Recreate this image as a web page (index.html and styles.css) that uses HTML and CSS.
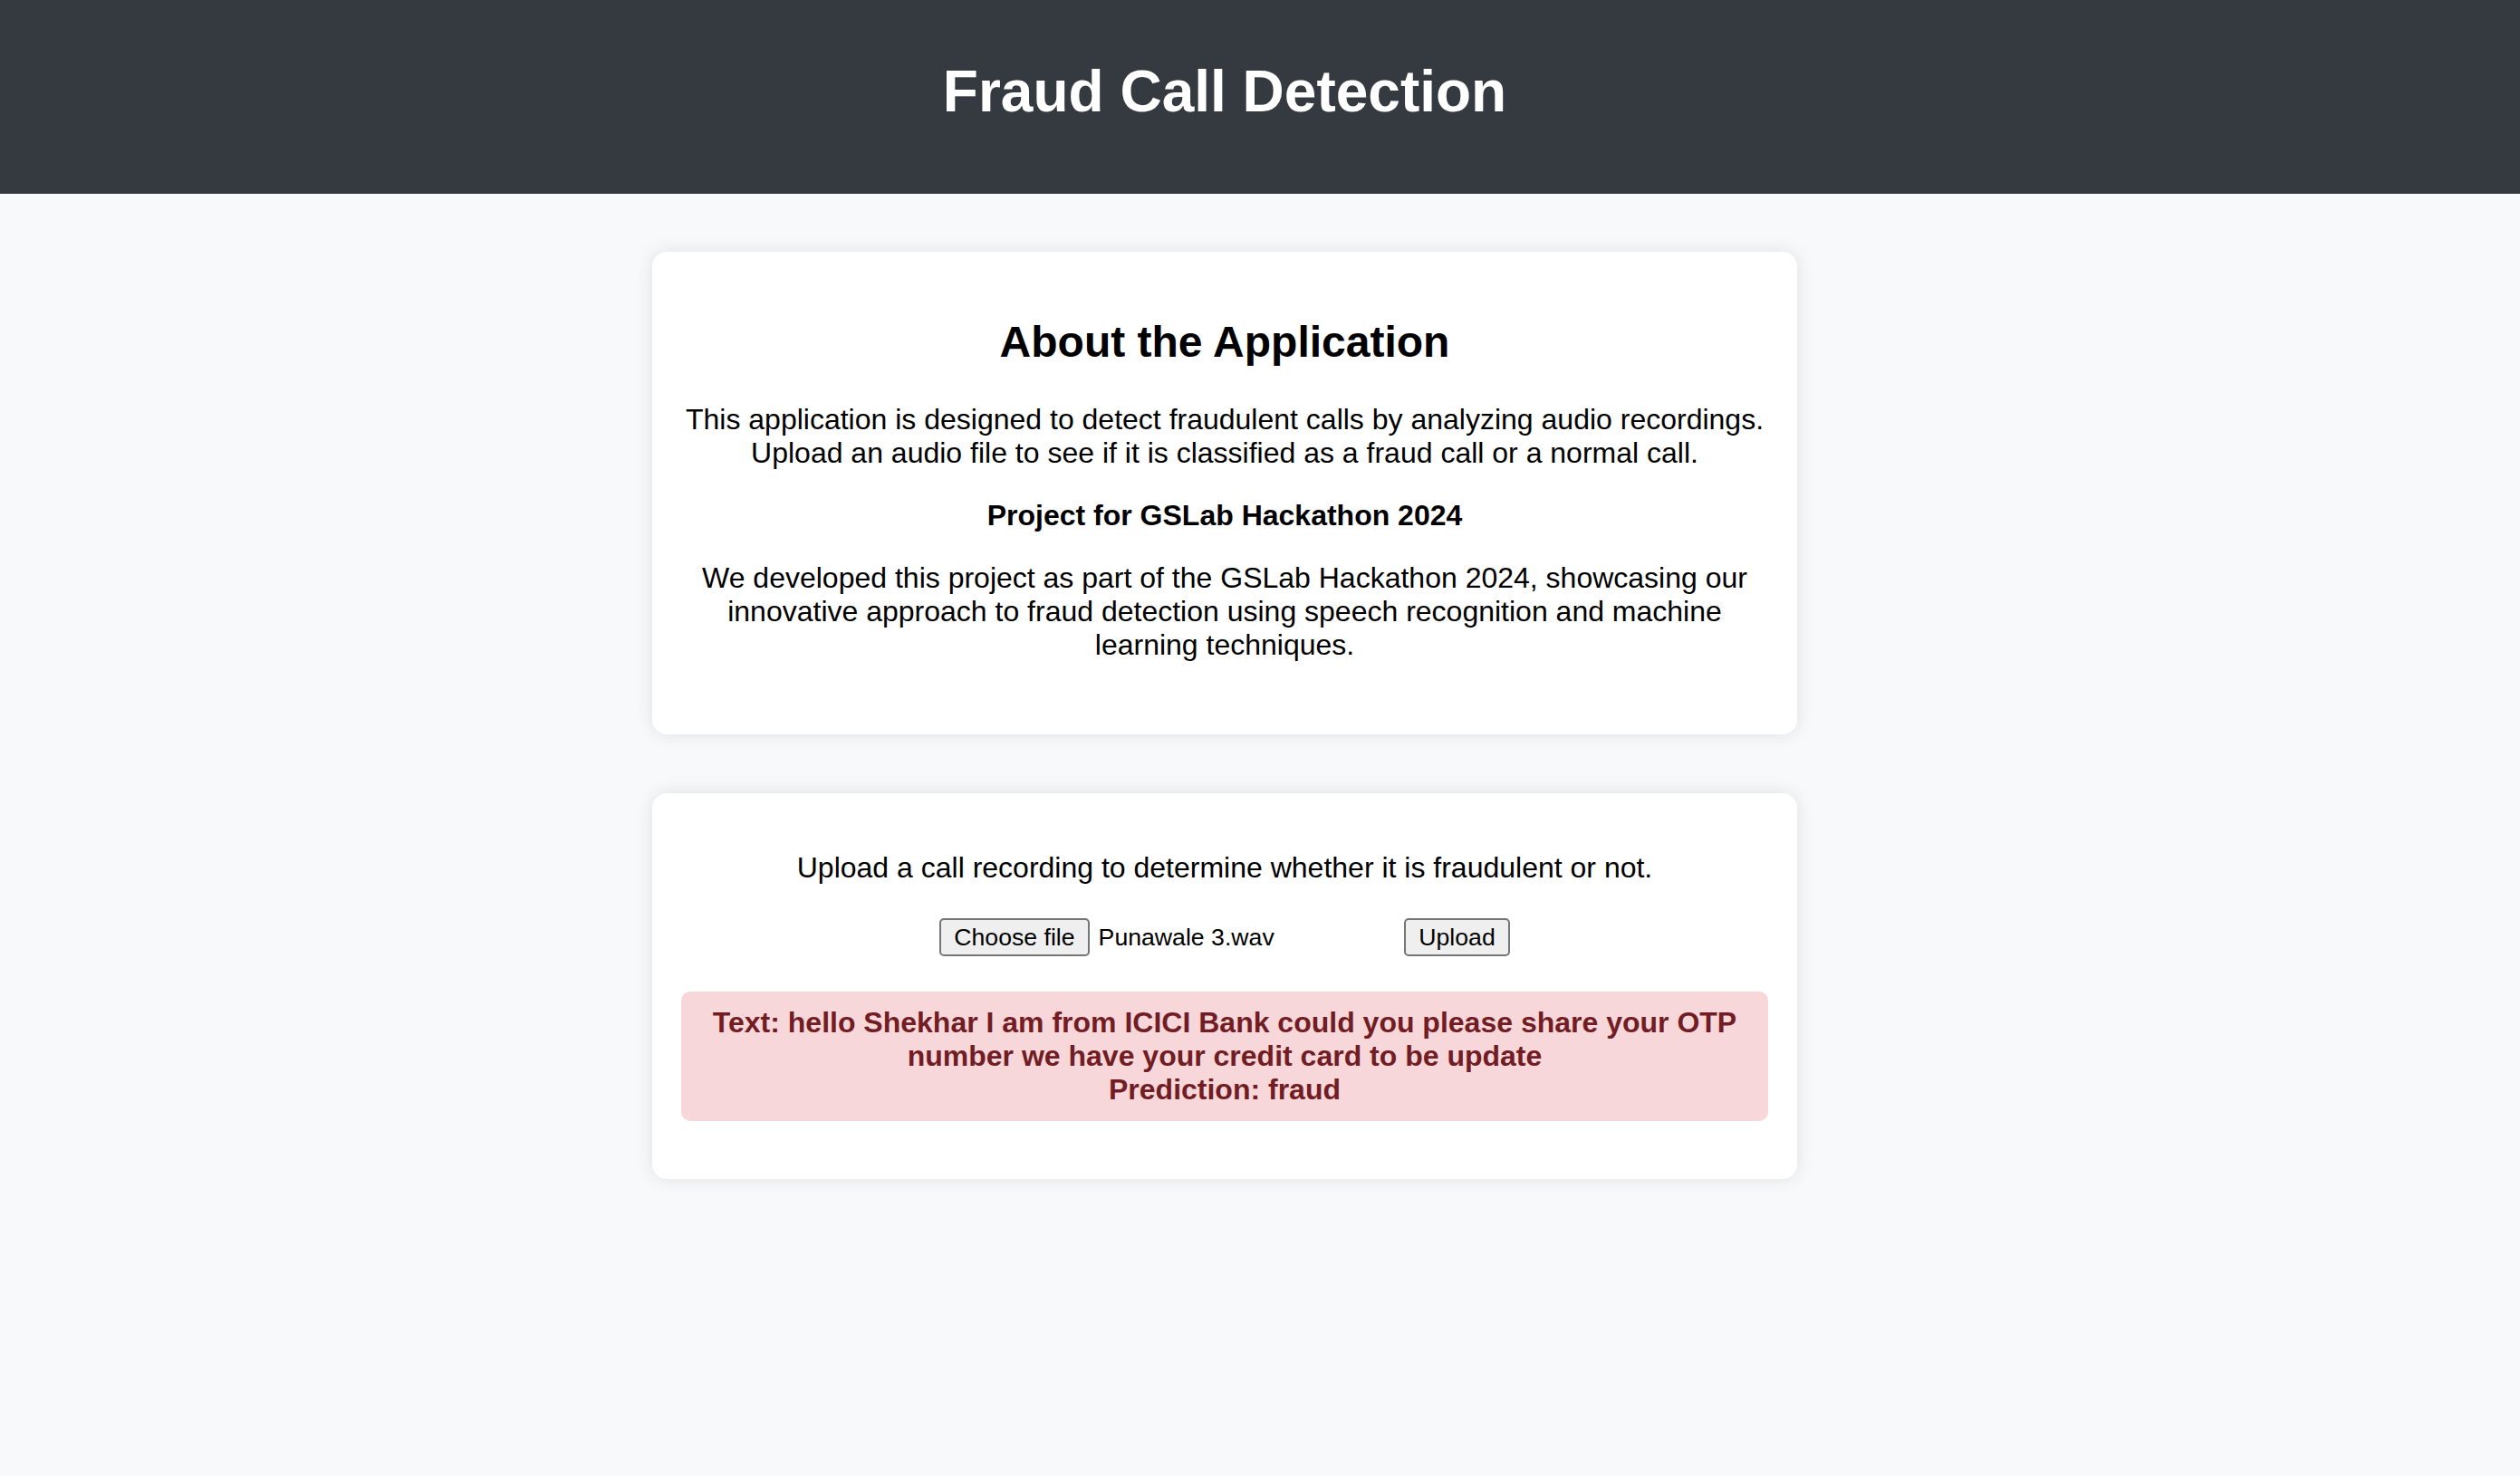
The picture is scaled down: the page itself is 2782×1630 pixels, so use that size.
FILE: index.html
```html
<!DOCTYPE html>
<html lang="en">
<head>
<meta charset="utf-8">
<title>Fraud Call Detection</title>
<link rel="stylesheet" href="styles.css">
</head>
<body>
<header class="site-header">
  <h1 class="site-title">Fraud Call Detection</h1>
</header>
<main class="page">
  <section class="card card-about">
    <h2 class="card-title">About the Application</h2>
    <p class="text">This application is designed to detect fraudulent calls by analyzing audio recordings. Upload an audio file to see if it is classified as a fraud call or a normal call.</p>
    <p class="text"><strong>Project for GSLab Hackathon 2024</strong></p>
    <p class="text">We developed this project as part of the GSLab Hackathon 2024, showcasing our innovative approach to fraud detection using speech recognition and machine learning techniques.</p>
  </section>
  <section class="card card-upload">
    <p class="text upload-intro">Upload a call recording to determine whether it is fraudulent or not.</p>
    <form class="upload-form">
      <div class="file-field">
        <label class="btn">Choose file<input class="file-input" type="file" accept="audio/*"></label>
        <span class="file-name">Punawale 3.wav</span>
      </div>
      <button class="btn" type="button">Upload</button>
    </form>
    <div class="alert">Text: hello Shekhar I am from ICICI Bank could you please share your OTP number we have your credit card to be update<br>Prediction: fraud</div>
  </section>
</main>
</body>
</html>
```
FILE: styles.css
```css
html, body {
  margin: 0;
  padding: 0;
}
body {
  background: #f8f9fa;
  color: #000;
  font-family: "Liberation Sans", Arial, Helvetica, sans-serif;
  min-height: 1630px;
}
.site-header {
  background: #343a40;
  color: #fff;
  padding: 64px 78px 76px 0;
  text-align: center;
}
.site-title {
  margin: 0;
  font-size: 64px;
  font-weight: bold;
  line-height: normal;
}
.page {
  padding: 64px 78px 0 0;
  display: flex;
  flex-direction: column;
  align-items: center;
  gap: 65px;
}
.card {
  box-sizing: border-box;
  width: 1264px;
  background: #fff;
  border-radius: 16px;
  box-shadow: 0 0 20px rgba(0, 0, 0, 0.1);
  padding: 32px;
  text-align: center;
}
.card-about {
  padding-bottom: 48px;
}
.card-title {
  font-size: 48px;
  font-weight: bold;
  margin: 40px 0;
  line-height: normal;
}
.text {
  font-size: 32px;
  line-height: normal;
  margin: 32px 0;
}
.card-title + .text {
  margin-top: 40px;
}
.upload-intro {
  margin: 32px 0 37px;
}
.upload-form {
  display: flex;
  justify-content: center;
  align-items: center;
  gap: 9px;
  height: 42px;
  margin: 0 0 39px;
}
.file-field {
  display: flex;
  align-items: center;
  gap: 10px;
  width: 504px;
}
.file-input {
  display: none;
}
.btn {
  box-sizing: border-box;
  height: 42px;
  display: inline-flex;
  align-items: center;
  padding: 0 14px;
  font-family: "Liberation Sans", Arial, Helvetica, sans-serif;
  font-size: 26.67px;
  color: #000;
  background: #efefef;
  border: 2px solid #767676;
  border-radius: 5px;
  cursor: default;
}
.file-name {
  font-size: 26.67px;
  white-space: nowrap;
}
.alert {
  background: #f8d7da;
  color: #721c24;
  font-size: 32px;
  font-weight: bold;
  line-height: normal;
  padding: 16px;
  border-radius: 10px;
  margin: 0 0 32px;
}
```
